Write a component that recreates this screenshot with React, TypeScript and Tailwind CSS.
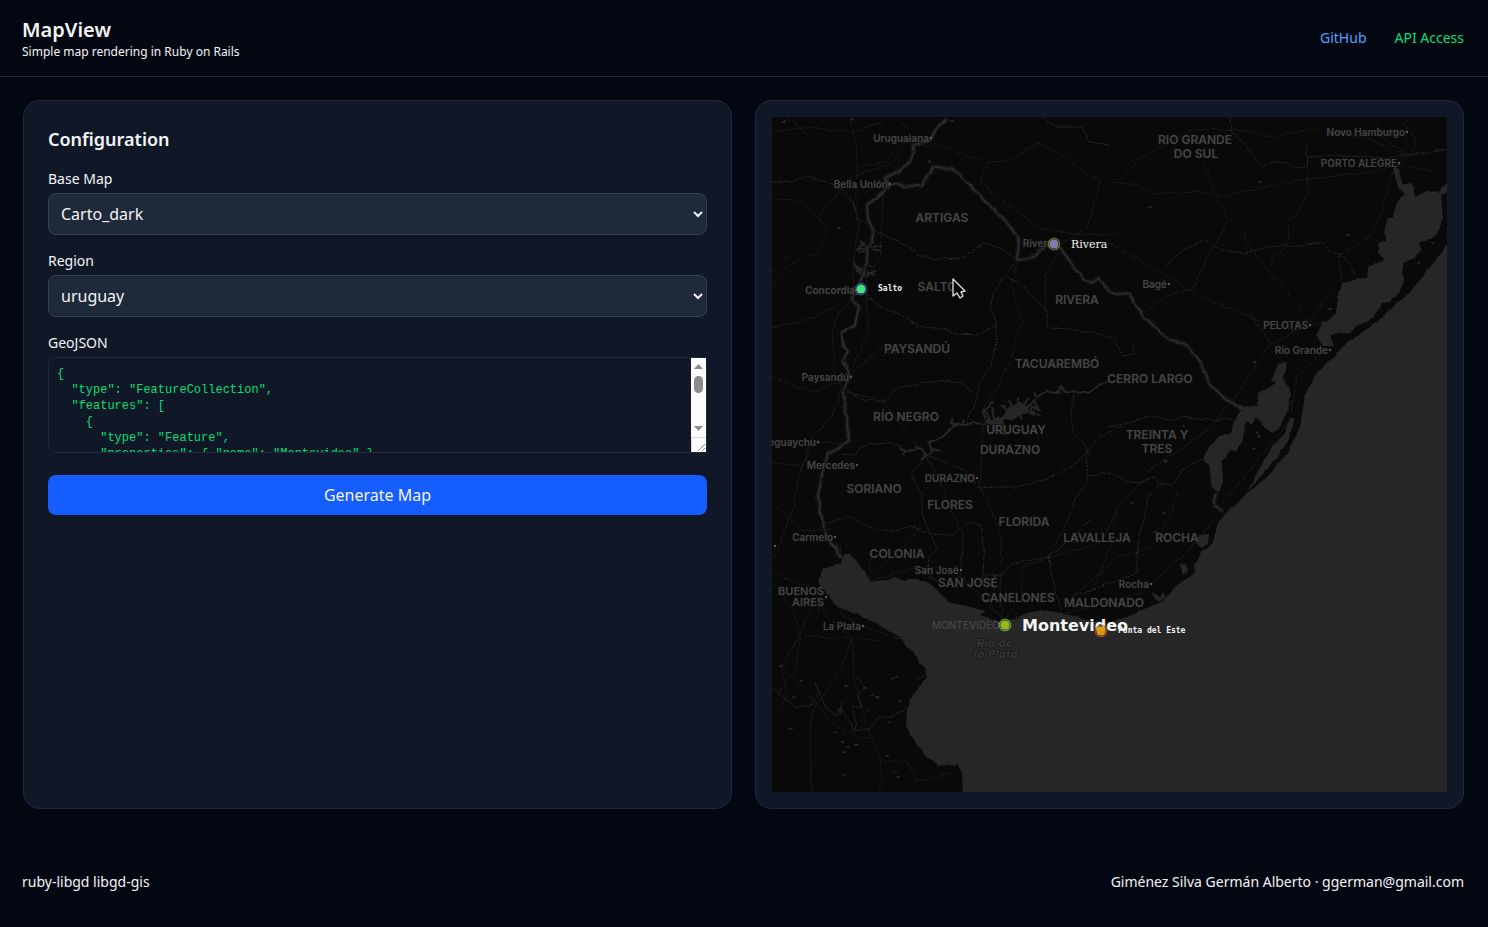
import React from 'react';

const geojson = `{
  "type": "FeatureCollection",
  "features": [
    {
      "type": "Feature",
      "properties": { "name": "Montevideo" },
      "geometry": {
        "type": "Point",
        "coordinates": [-56.1645, -34.9011]
      }
    },
    {
      "type": "Feature",
      "properties": { "name": "Punta del Este" },
      "geometry": {
        "type": "Point",
        "coordinates": [-54.9500, -34.9600]
      }
    },
    {
      "type": "Feature",
      "properties": { "name": "Salto" },
      "geometry": {
        "type": "Point",
        "coordinates": [-57.9667, -31.3833]
      }
    },
    {
      "type": "Feature",
      "properties": { "name": "Rivera" },
      "geometry": {
        "type": "Point",
        "coordinates": [-55.5508, -30.9053]
      }
    }
  ]
}`;

// Sea, lagoons and reservoirs
const water = [
  'M191 675L190 656L185 646L183 649L165 648L155 640L141 623L134 608L135 591L141 578L155 560L152 551L145 540L128 521L115 513L95 501L68 491L58 481L46 466L51 451L69 447L72 437L78 437L83 443L91 453L98 465L121 461L131 463L155 463L165 473L176 485L198 490L213 494L208 498L218 501L231 505L241 503L255 496L271 493L291 496L315 503L335 506L355 500L368 493L391 485L405 468L423 456L422 447L430 435L441 425L445 410L453 396L471 380L495 360L515 336L528 310L533 278L543 258L558 244L573 227L605 205L638 175L658 151L680 120V680H191Z',
  'M621 51L626 70L633 77L628 81L623 90L621 101L616 101L613 110L614 125L606 126L606 136L613 143L596 150L595 160L571 166L565 178L565 198L550 206L545 218L551 229L562 229L558 218L578 216L583 210L601 201L610 186L618 185L631 168L631 145L643 141L649 133L648 126L665 118L671 101L669 78L680 76V60L670 70L666 75L655 74L643 80L640 66L631 68L626 53Z',
  'M515 244L511 260L519 278L516 293L508 310L500 316L492 311L485 300L480 308L474 305L471 321L464 335L458 333L450 345L451 365L446 376L440 371L437 348L432 343L436 331L446 320L459 315L463 301L471 291L485 288L486 276L505 266L500 263L506 246Z',
  'M523 301L518 320L505 341L475 375L485 356L501 328L513 316L517 301Z',
  'M425 418L437 417L436 426L430 431L424 427Z',
  'M408 448L414 446L416 454L411 457Z',
  'M212 302L220 302L230 300L236 291L243 288L248 284L256 290L258 295L248 298L241 303L231 302L228 309L216 307Z',
  'M383 482L380 475L388 480L391 475L394 481L387 485Z',
  'M634 199L668 155L672 152L640 191Z',
];

const rivers = [
  'M175 1L165 11L158 23L141 28L140 43L126 55L113 61L118 68L111 76L95 88L96 101L101 113L100 126L95 131L96 145L90 161L88 171L80 180L87 190L83 208L70 216L71 228L75 235L71 245L78 258L71 275L75 301L77 325L56 336L50 358L46 380L51 408L58 425L70 441',
  'M120 67L131 69L150 69L160 51L180 51L198 68L215 86L231 101L246 120L245 143L258 142L275 128L288 131L298 145L311 161L320 166L326 161L338 175L358 178L370 198L388 215L398 223L413 227L428 245L438 268L455 283L471 291',
  'M443 376L443 390L451 394',
];

const reservoirs = [
  'M100 130L84 133L92 125L87 131M100 133L109 135M96 145L88 155L82 146L90 160L104 154L92 160',
  'M127 331L136 334L148 331L155 338L160 334L157 325L168 322L178 313L186 306L180 306L192 308L202 306L214 307',
  'M265 280L275 274L287 275L289 269L292 275L315 276L325 270L338 262',
];

// Narrow arms of the reservoirs
const inlets = [
  'M214 306L211 295L221 284M218 303L212 292M222 303L220 290M230 305L232 318M236 294L229 288M240 291L237 284M246 288L246 281M252 288L257 280M255 290L265 282M256 293L262 298L259 292L269 299M258 289L268 292M248 298L250 303M224 310L221 316',
  'M262 284L268 294M265 280L262 276M182 310L180 301M190 308L192 302M150 333L143 329M155 336L149 343M160 332L168 334M132 333L130 338',
  'M96 131L88 124M96 134L86 136M101 131L110 129M92 154L84 148M94 155L104 158M93 150L100 150',
];

const departments = [
  'M0 65L20 65L35 59L60 67L70 72L80 85L86 101L98 108',
  'M101 113L116 120L135 128L145 138L158 142L190 141L212 126L230 132L245 143',
  'M88 172L97 180L108 190L128 197L145 209L170 212L185 217L205 218L217 212L225 206L218 192L221 177L232 159L245 143',
  'M234 159L253 170L266 187L273 190L276 211L300 212L320 215L342 222L350 239L362 237L361 228',
  'M225 206L224 226L219 249L208 266L202 290L193 306',
  'M72 273L80 275L88 283L112 284L128 270L138 269L165 263L190 266L200 275',
  'M70 337L83 338L88 330L101 327L122 326L134 333',
  'M152 342L139 357L150 378L150 396L158 417L181 418L199 405L210 410L212 445L210 465L225 472',
  'M154 338L173 345L192 353L200 362L207 371L226 370L246 370L276 361L300 350L313 337L330 318L350 309',
  'M302 276L299 295L301 313L310 326L316 336L315 355L316 365L304 378L299 396L288 419L276 440L240 447L230 458L210 458',
  'M276 440L281 463L289 493M276 440L298 423L320 401',
  'M336 310L352 307L378 299L402 304L411 299L430 303L461 302',
  'M317 359L337 355L358 365L368 366L381 360L389 366L400 368L410 352L432 341',
  'M389 366L375 382L371 403L364 438L366 456L350 462L299 480',
  'M53 406L78 400L100 411L120 415L139 409L158 417M160 420L166 432L156 440L158 460L173 470',
  'M60 425L68 432L70 441',
  'M393 150L411 133L433 123L437 126L450 133L475 137L488 132L512 127L516 130L550 126L561 137L573 140L584 158',
  'M458 0L460 15L474 28L488 48L511 44L525 52L535 49L536 40L560 38L615 41L675 32',
];

const roads = [
  'M78 0L83 25L86 50L84 95L88 108L82 135L81 180L66 197L60 215L63 255L70 270L60 300L40 320L25 365L22 390L0 445',
  'M0 172L18 147L45 136L55 114L46 100L30 85L0 82M46 100L78 61L120 45L140 22L130 5',
  'M84 50L110 46L138 22M140 29L165 28L212 45L238 44L265 26L285 35L328 65L316 110L288 128',
  'M111 76L110 103L108 140L95 160L94 180L97 215L75 262M288 128L274 160L273 190',
  'M215 45L208 65L228 82L270 112L310 118L350 117',
  'M0 210L30 205L70 187M0 155L20 135M71 275L110 283L130 310L155 340L170 370L182 400L191 418L188 460',
  'M212 290L210 330L208 370L220 395L230 425L228 470L231 503',
  'M212 290L225 270L240 240L250 205L240 170L245 143',
  'M0 15L35 10L80 15L110 5M338 65L365 68L380 77L430 75L450 79L490 71L520 64L590 56L628 48',
  'M347 64L370 40L420 13L465 12L500 20L540 12L590 20L625 35L640 38L675 33',
  'M432 48L441 72L455 99L471 115L480 135L515 175L537 206L570 159L565 140L597 120L610 95L618 60L634 35',
  'M338 126L390 157L420 175L480 201L523 213L556 203M370 197L393 180L420 172L437 138L455 105',
  'M535 25L536 75L526 95L515 105L517 127L500 140L500 150M478 195L495 220L500 228L530 208',
  'M498 228L470 270L440 310L405 335L380 350L368 366L345 392L340 425L322 470M450 387L480 350L517 305L525 260L550 235',
  'M300 480L330 455L345 440L380 430L398 400L405 375M231 503L250 480L250 450L280 440L330 425L345 392M240 500L300 495L370 475L410 440L445 400',
  'M96 465L120 457L145 450L180 452L215 483L231 503M188 460L205 478L231 503M0 387L15 400L30 414L60 412',
  'M78 470L60 478L40 490L28 517L60 522L80 520L110 525M0 455L15 462L40 470L45 480M28 517L20 490L0 465M28 517L24 550L5 580M80 520L82 565L95 610L108 640L110 660L107 675',
  'M0 600L15 580L10 550L28 517M0 540L30 570L60 605L85 620L98 621M80 520L70 550L40 595L38 620L40 675',
  'M45 480L55 500L78 520M50 470L45 500M58 483L72 500L95 510L130 523M108 645L135 645L145 665L185 655M0 345L30 350L42 325L70 327',
  'M628 48L645 30L640 15L620 0M628 48L660 55M634 0L634 35L610 20L600 0M615 40L590 45',
  'M12 0L40 20M0 260L40 275L75 262M75 262L100 240L150 232L180 235M85 250L110 230M100 435L97 463L130 430L150 410',
];

const streams = [
  'M0 570L10 580L25 590L40 588L47 575L43 565L47 575L55 592L65 598L68 590L80 610L84 615L83 600L80 590L90 590L86 578L92 570L85 560M84 615L98 611L108 600L122 600L136 590',
  'M68 598L70 585M145 562L160 555M270 0L285 10L310 10L318 25L338 28M118 562L125 560',
];

const ponds = [
  [30, 563], [9, 549], [75, 568], [100, 578], [105, 580], [64, 616], [71, 625], [72, 636], [76, 630], [116, 639],
  [72, 657], [123, 656], [125, 660], [19, 612], [118, 605], [127, 585], [85, 628], [93, 571], [96, 593], [22, 580],
  [488, 65], [378, 90], [576, 118], [558, 192], [660, 125], [483, 246], [646, 146], [485, 315], [487, 319], [482, 332],
  [412, 309], [394, 344], [361, 386], [392, 396], [383, 415], [12, 5], [80, 2], [180, 3], [158, 45], [147, 28], [67, 111],
];

const regions = [
  { x: 170, y: 105, name: 'ARTIGAS' },
  { x: 165, y: 174, name: 'SALTO' },
  { x: 305, y: 187, name: 'RIVERA' },
  { x: 145, y: 236, name: 'PAYSANDÚ' },
  { x: 285, y: 251, name: 'TACUAREMBÓ' },
  { x: 378, y: 266, name: 'CERRO LARGO' },
  { x: 134, y: 304, name: 'RÍO NEGRO' },
  { x: 244, y: 317, name: 'URUGUAY' },
  { x: 238, y: 337, name: 'DURAZNO' },
  { x: 385, y: 322, name: 'TREINTA Y' },
  { x: 385, y: 336, name: 'TRES' },
  { x: 102, y: 376, name: 'SORIANO' },
  { x: 178, y: 392, name: 'FLORES' },
  { x: 252, y: 409, name: 'FLORIDA' },
  { x: 325, y: 425, name: 'LAVALLEJA' },
  { x: 405, y: 425, name: 'ROCHA' },
  { x: 125, y: 441, name: 'COLONIA' },
  { x: 196, y: 470, name: 'SAN JOSÉ' },
  { x: 246, y: 485, name: 'CANELONES' },
  { x: 332, y: 490, name: 'MALDONADO' },
  { x: 423, y: 27, name: 'RIO GRANDE' },
  { x: 424, y: 41, name: 'DO SUL' },
];

// x is the end of the name, where the town's dot sits
const towns = [
  { x: 157, y: 25, name: 'Uruguaiana' },
  { x: 116, y: 71, name: 'Bella Unión' },
  { x: 83, y: 177, name: 'Concordia' },
  { x: 281, y: 130, name: 'Rivera' },
  { x: 77, y: 264, name: 'Paysandú' },
  { x: 44, y: 329, name: 'eguaychu' },
  { x: 83, y: 352, name: 'Mercedes' },
  { x: 61, y: 424, name: 'Carmelo' },
  { x: 187, y: 457, name: 'San José' },
  { x: 89, y: 513, name: 'La Plata' },
  { x: 377, y: 471, name: 'Rocha' },
  { x: 395, y: 171, name: 'Bagé' },
  { x: 556, y: 237, name: 'Rio Grande' },
  { x: 633, y: 19, name: 'Novo Hamburgo' },
];

const cities = [
  { x: 625, y: 50, name: 'PORTO ALEGRE' },
  { x: 536, y: 212, name: 'PELOTAS' },
  { x: 203, y: 365, name: 'DURAZNO' },
];

const markers = [
  { x: 89, y: 172, fill: '#3fe57c', ring: '#4a46a8', name: 'Salto', label: "font-['DejaVu_Sans_Mono'] text-[8px] font-bold", dy: 2 },
  { x: 282, y: 127, fill: '#8279b4', ring: '#6f8f1a', name: 'Rivera', label: "font-['DejaVu_Serif'] text-[11px]", dy: 4 },
  { x: 233, y: 508, fill: '#9db60f', ring: '#69bb67', name: 'Montevideo', label: "font-['DejaVu_Sans'] text-[16px] font-bold", dy: 6 },
  { x: 329, y: 514, fill: '#d99a14', ring: '#b0552b', name: 'Punta del Este', label: "font-['DejaVu_Sans_Mono'] text-[8px] font-bold", dy: 2 },
];

function UruguayMap() {
  return (
    <svg viewBox="0 0 675 675" className="block w-full h-auto bg-[#090909]" role="img" aria-label="Map of Uruguay">
      <defs>
        <filter id="rough" x="0" y="0" width="675" height="675" filterUnits="userSpaceOnUse">
          <feTurbulence type="fractalNoise" baseFrequency="0.1" numOctaves="3" seed="4" />
          <feDisplacementMap in="SourceGraphic" scale="4" xChannelSelector="R" yChannelSelector="G" />
        </filter>
      </defs>

      <g filter="url(#rough)" fill="none" strokeLinejoin="round">
        <g stroke="#181818" strokeWidth="1">
          {roads.map((d) => <path key={d} d={d} />)}
        </g>
        <g stroke="#2b2b2b" strokeWidth="1" strokeDasharray="2 1">
          {departments.map((d) => <path key={d} d={d} />)}
        </g>
        <g stroke="#222222" strokeWidth="1">
          {streams.map((d) => <path key={d} d={d} />)}
        </g>
        <g stroke="#262626" strokeWidth="2">
          {reservoirs.map((d) => <path key={d} d={d} />)}
          {inlets.map((d) => <path key={d} d={d} />)}
        </g>
        <g stroke="#131313" strokeWidth="5">
          {rivers.map((d) => <path key={d} d={d} />)}
        </g>
        <g stroke="#2e2e2e" strokeWidth="1.6">
          {rivers.map((d) => <path key={d} d={d} />)}
        </g>
        <g fill="#262626">
          {water.map((d) => <path key={d} d={d} />)}
          {ponds.map(([x, y]) => <ellipse key={`${x}-${y}`} cx={x} cy={y} rx="2" ry="1" />)}
        </g>
      </g>

      {/* Base map names */}
      <g className="font-['Inter',sans-serif] font-semibold" fill="#454545" stroke="#0f0f0f" strokeWidth="1" paintOrder="stroke">
        <g className="text-[12px]" textAnchor="middle">
          {regions.map((r) => <text key={r.name + r.y} x={r.x} y={r.y}>{r.name}</text>)}
        </g>
        <g className="text-[10px]" textAnchor="end">
          {towns.map((t) => <text key={t.name} x={t.x} y={t.y}>{t.name}</text>)}
          {cities.map((c) => <text key={c.name} x={c.x} y={c.y}>{c.name}</text>)}
        </g>
        <g className="text-[11px]" textAnchor="end">
          <text x="52" y="478">BUENOS</text>
          <text x="52" y="489">AIRES</text>
        </g>
      </g>
      <text x="160" y="512" fill="#464646" className="font-['Inter',sans-serif] text-[10px] font-medium">MONTEVIDEO</text>
      <g className="font-['Inter',sans-serif] text-[11px] font-medium italic tracking-wider" fill="#3b3b3b" stroke="#1c1c1c" strokeWidth="2" paintOrder="stroke" textAnchor="middle">
        <text x="223" y="530">Río de</text>
        <text x="224" y="541">la Plata</text>
      </g>
      <g fill="#5a5a5a">
        {[...towns, ...cities].map((t) => (
          <circle key={t.name + t.y} cx={t.x + 2} cy={t.y - 4} r="1.2" />
        ))}
        <circle cx="54" cy="480" r="1.2" />
        <circle cx="3" cy="429" r="1.2" />
      </g>

      {/* GeoJSON points */}
      {markers.map((m) => (
        <g key={m.name}>
          <circle cx={m.x} cy={m.y} r="4.6" fill={m.fill} />
          <circle cx={m.x} cy={m.y} r="5.6" fill="none" stroke={m.ring} strokeWidth="1.4" strokeDasharray="1.4 0.4" />
          <text x={m.x + 17} y={m.y + m.dy} fill="#f5f5f5" className={m.label}>{m.name}</text>
        </g>
      ))}

      {/* Pointer */}
      <path d="M181 162V179L185 176L188 181L191 179L189 175L193 174Z" fill="#050505" stroke="#e5e5e5" strokeWidth="1.3" strokeLinejoin="round" />
    </svg>
  );
}

// Light scrollbar with arrows and a resize corner
function Scrollbar() {
  return (
    <div className="pointer-events-none absolute inset-y-px right-px flex w-[15px] flex-col justify-between bg-[#fcfcfc]" aria-hidden="true">
      <svg viewBox="0 0 15 36" className="h-9 w-full" fill="#8b8b8b">
        <path d="M3 11L7.500 6L12 11Z" />
        <rect x="3" y="18" width="9" height="17" rx="4.500" />
      </svg>
      <svg viewBox="0 0 15 31" className="h-[31px] w-full">
        <path d="M3 5L7.500 10L12 5Z" fill="#8b8b8b" />
        <path d="M0 16.500H15M0.500 16V31" stroke="#dcdcdc" fill="none" />
        <path d="M7 30L14 23M11 30L14 27" stroke="#8b8b8b" fill="none" />
      </svg>
    </div>
  );
}

export default function App() {
  return (
    <div className="min-h-screen bg-gray-950 text-gray-100 font-['Noto_Sans',sans-serif]">
      {/* Header */}
      <header className="flex items-center justify-between border-b border-gray-800 py-4 pl-[22px] pr-6">
        <div>
          <h1 className="text-xl leading-7 font-semibold">MapView</h1>
          <p className="text-xs">Simple map rendering in Ruby on Rails</p>
        </div>
        <nav className="flex gap-7 text-sm">
          <a href="#github" className="text-blue-400">GitHub</a>
          <a href="#api" className="text-green-400">API Access</a>
        </nav>
      </header>

      <main className="grid grid-cols-1 md:grid-cols-2 gap-[23px] pt-[23px] pb-6 pl-[23px] pr-6">
        {/* Configuration */}
        <section className="rounded-2xl border border-gray-800 bg-gray-900 p-6">
          <h2 className="mb-4 text-lg leading-7 font-semibold">Configuration</h2>
          <form className="space-y-4" onSubmit={(e) => e.preventDefault()}>
            <div>
              <label htmlFor="base-map" className="block text-sm">Base Map</label>
              <select id="base-map" className="mt-1 block w-full h-[42px] rounded-lg border border-gray-700 bg-gray-800 px-2">
                <option>Carto_dark</option>
                <option>Carto_light</option>
              </select>
            </div>
            <div>
              <label htmlFor="region" className="block text-sm">Region</label>
              <select id="region" className="mt-1 block w-full h-[42px] rounded-lg border border-gray-700 bg-gray-800 px-2">
                <option>uruguay</option>
                <option>argentina</option>
              </select>
            </div>
            <div className="pb-1.5">
              <label htmlFor="geojson" className="block text-sm">GeoJSON</label>
              <div className="relative mt-1">
                <textarea
                  id="geojson"
                  defaultValue={geojson}
                  className="block w-full h-24 resize-none overflow-y-scroll rounded-lg border border-gray-800 bg-gray-900 p-2 font-['Liberation_Mono',monospace] text-xs text-green-400"
                />
                <Scrollbar />
              </div>
            </div>
            <button type="submit" className="w-full h-10 rounded-lg bg-blue-600">Generate Map</button>
          </form>
        </section>

        {/* Map */}
        <section className="rounded-2xl border border-gray-800 bg-gray-900 p-4">
          <UruguayMap />
        </section>
      </main>

      <footer className="mt-[15px] flex justify-between py-6 pl-[22px] pr-6 text-sm">
        <span>ruby-libgd libgd-gis</span>
        <span>Giménez Silva Germán Alberto · ggerman@gmail.com</span>
      </footer>
    </div>
  );
}
